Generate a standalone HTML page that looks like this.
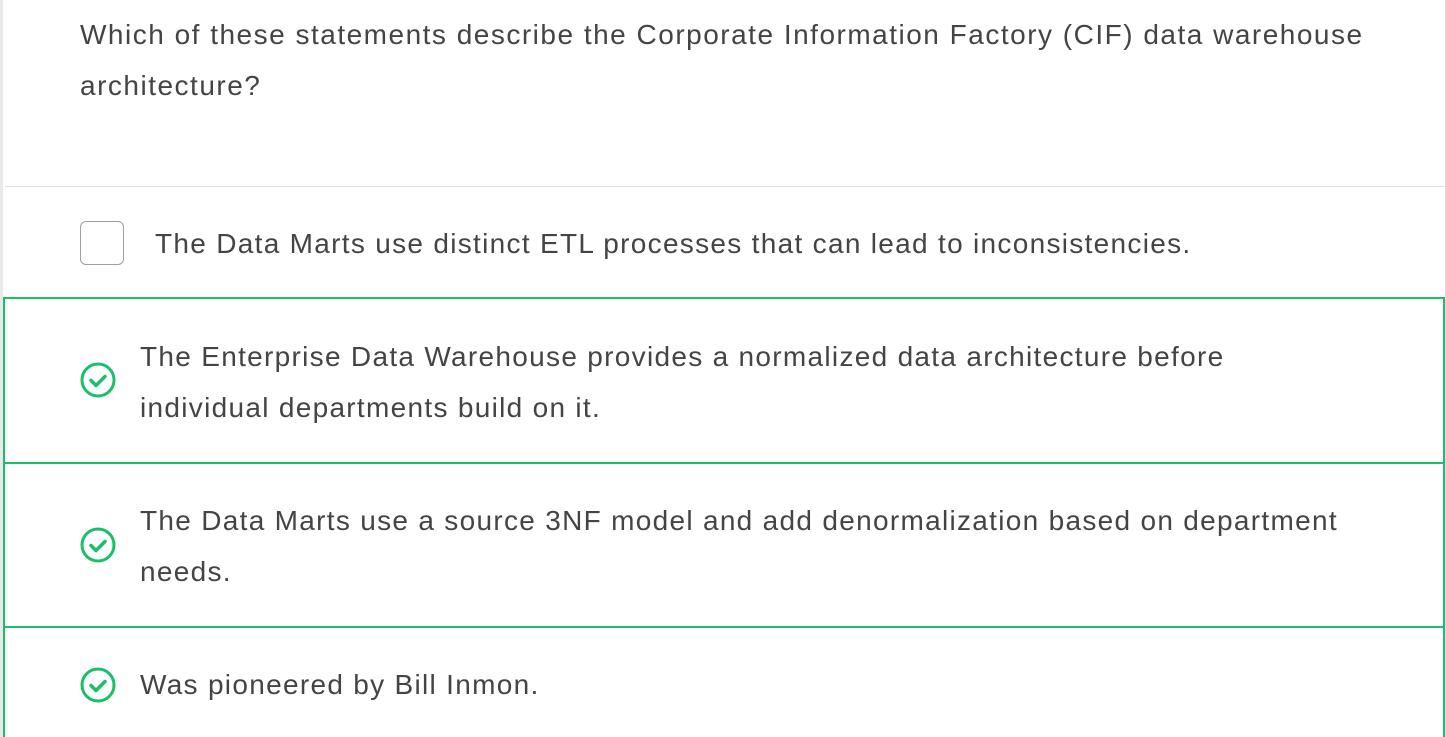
<!DOCTYPE html>
<html><head><style>
body{margin:0;width:1446px;height:737px;overflow:hidden;background:#fff;font-family:"Liberation Sans",sans-serif;color:#444;position:relative}
.l{position:absolute;left:0;top:0;width:3px;height:737px;background:#e8e9eb}
.r{position:absolute;right:0;top:0;width:1px;height:737px;background:#e0e0e0}
.q{position:absolute;left:80px;top:9px;font-size:28px;line-height:51px;width:1310px;letter-spacing:1.5px}
.sep{position:absolute;left:5px;right:1px;top:186px;height:1px;background:#dfe3e8}
.cb{position:absolute;left:80px;top:221px;width:42px;height:42px;border:1px solid #9aa0a6;border-radius:6px}
.t{position:absolute;font-size:28px;line-height:51px;letter-spacing:1.3px}
.h{position:absolute;left:3px;width:1442px;height:2px;background:#1bbf6a}
.v{position:absolute;top:298px;width:2px;height:439px;background:#1bbf6a}
svg{position:absolute}
</style></head><body>
<div class="l"></div><div class="r"></div>
<div class="q">Which of these statements describe the Corporate Information Factory (CIF) data warehouse architecture?</div>
<div class="sep"></div>
<div class="cb"></div>
<div class="t" style="left:155px;top:218px">The Data Marts use distinct ETL processes that can lead to inconsistencies.</div>
<div class="h" style="top:297px"></div>
<div class="h" style="top:462px"></div>
<div class="h" style="top:626px"></div>
<div class="v" style="left:3px"></div>
<div class="v" style="left:1443px"></div>
<svg style="left:80px;top:362px" width="36" height="36" viewBox="0 0 36 36"><circle cx="18" cy="18" r="16" fill="none" stroke="#1bbf6a" stroke-width="3"/><path d="M11 18.5l5 5 9-9" fill="none" stroke="#1bbf6a" stroke-width="3.5" stroke-linecap="round" stroke-linejoin="round"/></svg>
<div class="t" style="left:140px;top:331px;width:1150px">The Enterprise Data Warehouse provides a normalized data architecture before individual departments build on it.</div>
<svg style="left:80px;top:527px" width="36" height="36" viewBox="0 0 36 36"><circle cx="18" cy="18" r="16" fill="none" stroke="#1bbf6a" stroke-width="3"/><path d="M11 18.5l5 5 9-9" fill="none" stroke="#1bbf6a" stroke-width="3.5" stroke-linecap="round" stroke-linejoin="round"/></svg>
<div class="t" style="left:140px;top:495px;width:1260px">The Data Marts use a source 3NF model and add denormalization based on department needs.</div>
<svg style="left:80px;top:667px" width="36" height="36" viewBox="0 0 36 36"><circle cx="18" cy="18" r="16" fill="none" stroke="#1bbf6a" stroke-width="3"/><path d="M11 18.5l5 5 9-9" fill="none" stroke="#1bbf6a" stroke-width="3.5" stroke-linecap="round" stroke-linejoin="round"/></svg>
<div class="t" style="left:140px;top:659px">Was pioneered by Bill Inmon.</div>
</body></html>
